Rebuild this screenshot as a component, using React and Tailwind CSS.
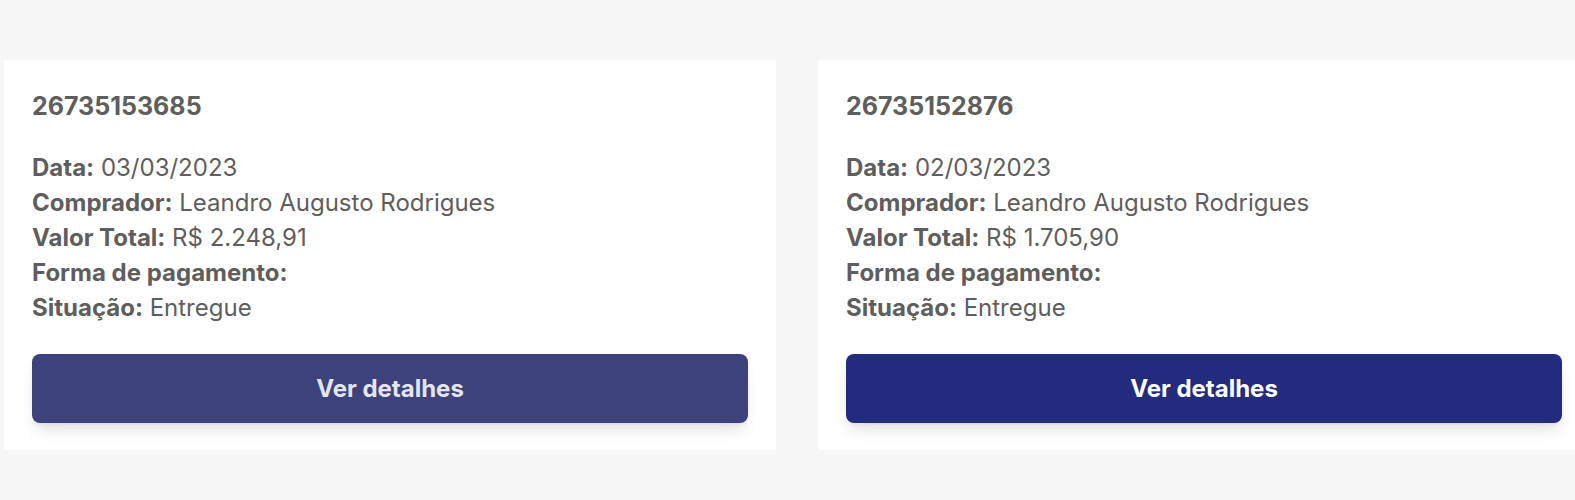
const pedidos = [
  {
    id: '26735153685',
    data: '03/03/2023',
    comprador: 'Leandro Augusto Rodrigues',
    valor: 'R$ 2.248,91',
    pagamento: '',
    situacao: 'Entregue',
    btn: 'bg-[#3d427c] text-[#e3e6ef]',
  },
  {
    id: '26735152876',
    data: '02/03/2023',
    comprador: 'Leandro Augusto Rodrigues',
    valor: 'R$ 1.705,90',
    pagamento: '',
    situacao: 'Entregue',
    btn: 'bg-[#232c7c] text-white',
  },
];

function Linha({ label, value }) {
  return (
    <p className="leading-[35px]">
      <span className="font-bold">{label}:</span> {value}
    </p>
  );
}

function PedidoCard({ pedido }) {
  return (
    <div className="w-[772px] shrink-0 bg-white px-7 pt-7 pb-[27px]">
      <h2 className="text-[25px] leading-9 font-bold">{pedido.id}</h2>
      <div className="mt-[26px] text-[24px]">
        <Linha label="Data" value={pedido.data} />
        <Linha label="Comprador" value={pedido.comprador} />
        <Linha label="Valor Total" value={pedido.valor} />
        <Linha label="Forma de pagamento" value={pedido.pagamento} />
        <Linha label="Situação" value={pedido.situacao} />
      </div>
      <button
        className={`mt-[29px] w-full h-[69px] rounded-lg text-[24px] font-bold shadow-lg ${pedido.btn}`}
      >
        Ver detalhes
      </button>
    </div>
  );
}

export default function App() {
  return (
    <div
      className="w-[1575px] h-[500px] overflow-hidden bg-[#f7f7f7] pt-[60px] pl-1 text-[#5e5e5e]"
      style={{ fontFamily: 'Inter, "Noto Sans", sans-serif' }}
    >
      <div className="flex gap-[42px]">
        {pedidos.map((p) => (
          <PedidoCard key={p.id} pedido={p} />
        ))}
      </div>
    </div>
  );
}
